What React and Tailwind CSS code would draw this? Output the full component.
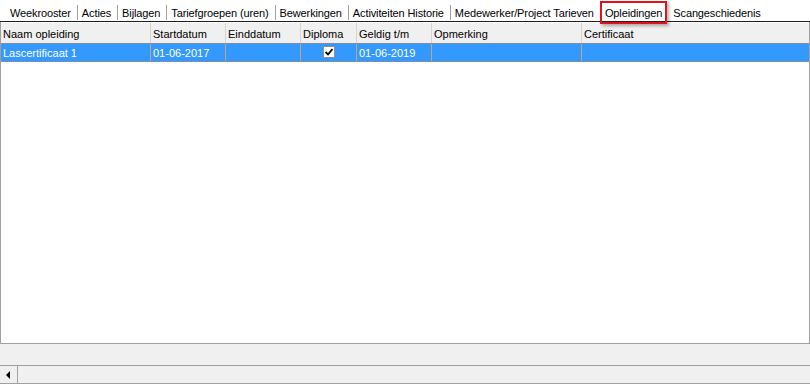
import React from "react";

const tabs = [
  "Weekrooster",
  "Acties",
  "Bijlagen",
  "Tariefgroepen (uren)",
  "Bewerkingen",
  "Activiteiten Historie",
  "Medewerker/Project Tarieven",
  "Opleidingen",
  "Scangeschiedenis",
];

const columns = [
  "Naam opleiding",
  "Startdatum",
  "Einddatum",
  "Diploma",
  "Geldig t/m",
  "Opmerking",
  "Certificaat",
];

const gridCols = "grid grid-cols-[150px_75px_75px_56px_75px_150px_1fr]";

const Check = () => (
  <div className="w-[12px] h-[12px] bg-white border border-[#8f8f8f] flex items-center justify-center">
    <svg width="8" height="8" viewBox="0 0 8 8">
      <path d="M0.5 4 L3 6.5 L7.5 1" fill="none" stroke="#000" strokeWidth="1.8" />
    </svg>
  </div>
);

export default function App() {
  const active = "Opleidingen";

  return (
    <div className="w-[810px] h-[384px] flex flex-col bg-white font-['Liberation_Sans',Arial,sans-serif] text-[11px] leading-[13px] text-black overflow-hidden">
      {/* Tab strip */}
      <div className="relative z-10 h-[21px] flex pl-[10px] tracking-[-0.12px]">
        {tabs.map((t, i) => {
          const isActive = t === active;
          const next = tabs[i + 1];
          const showSep = next && !isActive && next !== active;
          return (
            <div key={t} className="flex">
              <span className="relative pt-[7px] whitespace-nowrap">
                {t}
                {isActive && (
                  <span className="absolute left-[-5px] top-[1px] w-[67px] h-[23px] border-2 border-[#e3121b] shadow-[2px_2px_3px_rgba(0,0,0,0.3)]" />
                )}
              </span>
              {showSep && <span className="ml-[6px] mr-[4px] mt-[5px] w-px h-[15px] bg-[#a0a0a0]" />}
              {next && !showSep && <span className="w-[11px]" />}
            </div>
          );
        })}
      </div>
      <div className="h-px bg-[#1e1e1e]" />

      {/* Grid */}
      <div className="flex-1 border-x border-[#a0a0a0] pt-px">
        <div className={`${gridCols} h-[20px] bg-[#f0f0f0]`}>
          {columns.map((c, i) => (
            <div
              key={c}
              className={`pl-[2px] pt-[5px] whitespace-nowrap ${i < columns.length - 1 ? "border-r border-[#d4d4d4]" : ""}`}
            >
              {c}
            </div>
          ))}
        </div>
        <div className={`${gridCols} h-[19px] bg-[#3399ff] text-white border-y border-dotted border-[#c8864a]`}>
          <div className="pl-[2px] pt-[3px] border-r border-[#c9a27a]">Lascertificaat 1</div>
          <div className="pl-[2px] pt-[3px] border-r border-[#c9a27a]">01-06-2017</div>
          <div className="border-r border-[#c9a27a]" />
          <div className="flex justify-center pt-[2px] border-r border-[#c9a27a]">
            <Check />
          </div>
          <div className="pl-[2px] pt-[3px] border-r border-[#c9a27a]">01-06-2019</div>
          <div className="border-r border-[#c9a27a]" />
          <div />
        </div>
      </div>

      {/* Footer */}
      <div className="h-[22px] border-t border-[#a0a0a0] bg-[#f0f0f0]" />
      <div className="h-[19px] border-y border-[#a0a0a0] bg-[#f0f0f0] flex">
        <div className="w-[18px] border-r border-[#a0a0a0] flex items-center justify-center">
          <svg width="5" height="8" viewBox="0 0 5 8">
            <polygon points="0,4 4,0 4,8" fill="#000" />
          </svg>
        </div>
        <div className="flex-1" />
      </div>
    </div>
  );
}
